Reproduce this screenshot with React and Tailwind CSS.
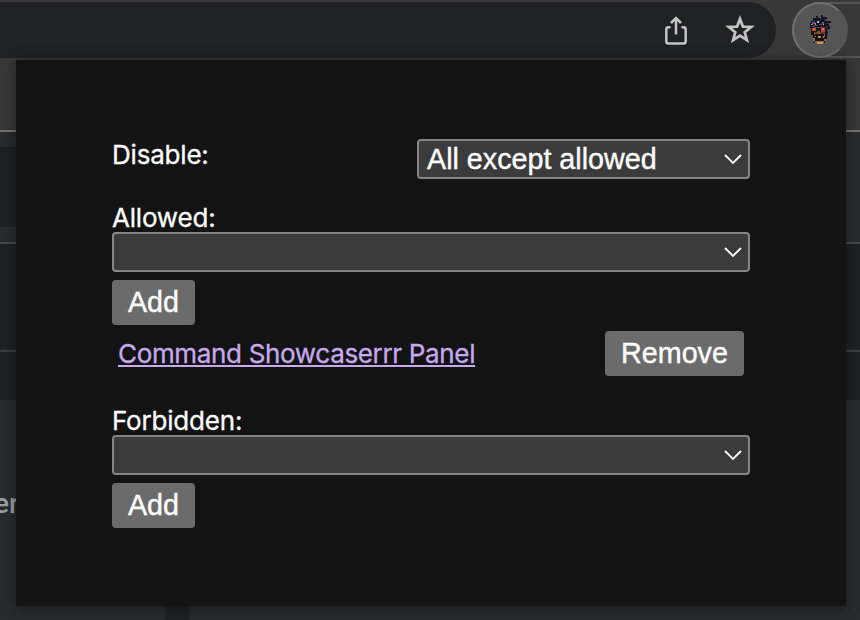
function ShareIcon() {
  return (
    <svg className="h-9 w-8 shrink-0" viewBox="0 0 32 36" fill="none" stroke="#c4c4c4" strokeWidth="2.5">
      <path d="M10.5 15.2H8.6Q6.3 15.2 6.3 17.4V29.3Q6.3 31.6 8.6 31.6H23.4Q25.7 31.6 25.7 29.3V17.4Q25.7 15.2 23.4 15.2H21.5" />
      <path d="M16 22.5V6" />
      <path d="M11 11 16 6 21 11" />
    </svg>
  );
}

function StarIcon() {
  return (
    <svg className="h-9 w-9 shrink-0" viewBox="0 0 36 36" fill="none" stroke="#c4c4c4" strokeWidth="2.7">
      <path d="M18 6.9 20.9 14.6 29.2 15 22.7 20.2 24.9 28.2 18 23.6 11.1 28.2 13.3 20.2 6.8 15 15.1 14.6Z" />
    </svg>
  );
}

function Avatar() {
  return (
    <svg className="h-8 w-6" viewBox="0 0 24 32">
      <path fill="#15161c" d="M3 7h2V4h3V2h2v2h3V1h2v2h4v2h-1v2h5v2h-2v3h1v3h-2v5h-1v5h-2v4h-3v1H9v-1H6v-3H5v-5H3v-7H2v-5h1z" />
      <path fill="#2b3a52" d="M6 6h1v2H6zM16 5h2v2h-2zM18 9h3v1h-3zM18 12h2v2h-2zM12 4h1v2h-1zM19 15h1v3h-1zM19 19h1v3h-1z" />
      <path fill="#7b4aa8" d="M4 8h3v2H4zM14 8h2v2h-2z" />
      <path fill="#c98468" d="M3 10h2v1H3zM7 9h1v2H7z" />
      <path fill="#a9bddb" d="M9 7h2v2H9zM15 10h1v1h-1z" />
      <path fill="#45558f" d="M6 11h3v1H6zM11 10h3v1h-3zM4 12h2v1H4z" />
      <path fill="#593f31" d="M6 13h11v1H6zM6 18h11v3H6z" />
      <path fill="#c23d38" d="M4 14h4v3H4zM13 14h4v4h-4z" />
      <path fill="#ea6352" d="M5 14h2v2H5zM14 14h2v2h-2z" />
      <path fill="#7c5b3b" d="M9 17h3v3H9zM6 19h1v2H6zM16 20h1v3h-1z" />
      <path fill="#16130f" d="M7 20h9v6H7z" />
      <path fill="#c08a4c" d="M10 22h3v2h-3zM7 22h1v1H7zM15 22h1v2h-1z" />
      <path fill="#94673f" d="M5 24h2v3H5zM16 25h2v2h-2zM7 27h9v2H7z" />
      <path fill="#c59559" d="M9 28h6v2H9z" />
    </svg>
  );
}

function Select({ className, children }) {
  return (
    <div className={`flex h-10 items-center justify-between rounded-[4px] border-2 border-[#858585] bg-[#3b3b3b] pl-2 pr-[5px] ${className}`}>
      <span className="whitespace-nowrap text-[28.7px] leading-9 [-webkit-text-stroke:0.4px_white]">{children}</span>
      <svg className="h-5 w-5 shrink-0" viewBox="0 0 20 20" fill="none" stroke="#fff" strokeWidth="1.8">
        <path d="m2 6 8 8L18 6" />
      </svg>
    </div>
  );
}

function Button({ className, children }) {
  return (
    <button className={`flex h-[45px] items-center justify-center rounded-[4px] bg-[#6b6b6b] text-[28.7px] leading-none [-webkit-text-stroke:0.4px_white] ${className}`}>
      {children}
    </button>
  );
}

function Label({ children }) {
  return (
    <div className="h-8 font-['Inter',sans-serif] text-[26px] leading-8 tracking-[-0.2px] [-webkit-text-stroke:0.3px_white]">
      {children}
    </div>
  );
}

function Toolbar() {
  return (
    <header className="flex h-[60px] items-center justify-between bg-[#383838]">
      <div className="flex h-14 w-[776px] items-center justify-end gap-[30px] rounded-r-full bg-[#202124] pr-[18px]">
        <ShareIcon />
        <StarIcon />
      </div>
      <div className="flex h-14 w-[68px] rounded-l-full border-y-2 border-l-2 border-[#555]">
        <div className="-my-0.5 -ml-0.5 flex h-14 w-14 items-center justify-center rounded-full border-2 border-[#707070] border-r-[#555] bg-[#555]">
          <Avatar />
        </div>
      </div>
    </header>
  );
}

function Backdrop() {
  return (
    <div className="flex h-[560px] flex-col overflow-hidden bg-[#292a2d]">
      <div className="h-[72px] shrink-0 border-b-2 border-[#737373] bg-[#383838]" />
      <div className="h-28 shrink-0 border-b-2 border-[#48494b] py-[15px]">
        <div className="h-20 w-10 bg-[#202124]" />
      </div>
      <div className="h-[108px] shrink-0 border-b-2 border-[#3d3e40] bg-[#202124]" />
      <div className="h-12 shrink-0 bg-[#202124]" />
      <div className="flex flex-1 justify-between">
        <div className="w-[165px] pt-[88px]">
          <div className="-ml-[6px] font-[Roboto,sans-serif] text-[28px] font-medium leading-8 text-[#9aa0a6]">er</div>
        </div>
        <div className="w-6 bg-[#202124]" />
        <div className="w-[671px]" />
      </div>
    </div>
  );
}

function Popup() {
  return (
    <section className="absolute left-4 top-[60px] h-[546px] w-[830px] bg-[#131313] pl-24 pr-24 pt-[79px] text-white shadow-[0_2px_12px_1px_rgba(0,0,0,0.4)]">
      <div className="flex h-[63px] w-[638px] items-start justify-between">
        <Label>Disable:</Label>
        <Select className="w-[333px]">All except allowed</Select>
      </div>
      <Label>Allowed:</Label>
      <Select className="-mt-0.5 w-[638px]" />
      <Button className="mt-2 w-[83px]">Add</Button>
      <div className="mt-1.5 flex w-[632px] items-center justify-between pl-1.5">
        <a className="whitespace-nowrap font-['Inter',sans-serif] text-[26px] leading-8 tracking-[-0.33px] text-[#c8a9ee] underline decoration-2 underline-offset-[2px] [-webkit-text-stroke:0.3px_#c8a9ee] [text-decoration-skip-ink:none]">
          Command Showcaserrr Panel
        </a>
        <Button className="w-[139px]">Remove</Button>
      </div>
      <div className="mt-[29px]">
        <Label>Forbidden:</Label>
      </div>
      <Select className="-mt-0.5 w-[638px]" />
      <Button className="mt-2 w-[83px]">Add</Button>
    </section>
  );
}

export default function App() {
  return (
    <main className="relative h-[620px] w-[860px] overflow-hidden font-['Liberation_Sans',Arial,sans-serif]">
      <Toolbar />
      <Backdrop />
      <Popup />
    </main>
  );
}
